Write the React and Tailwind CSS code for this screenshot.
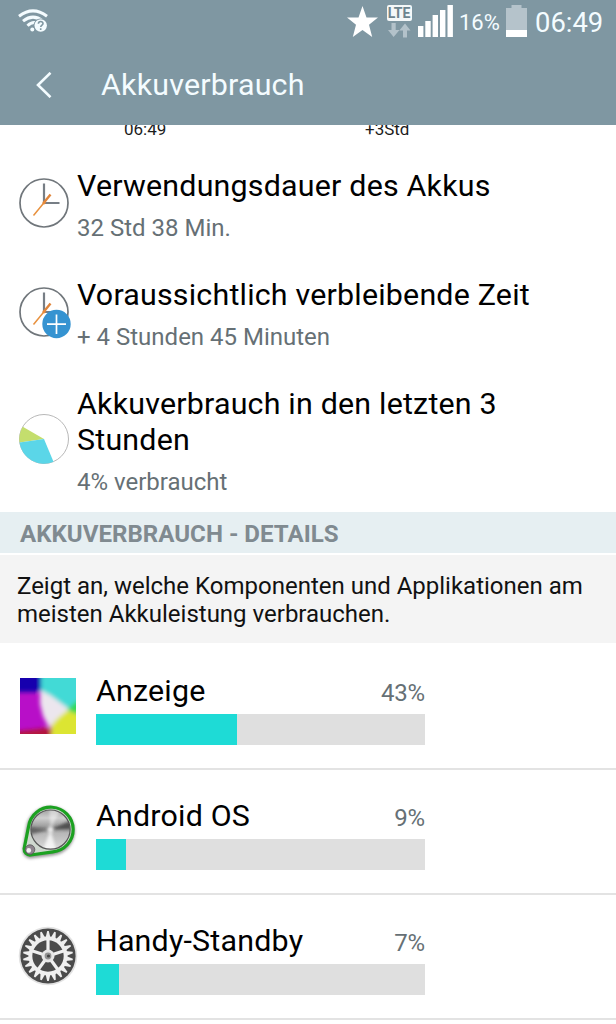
const teeth = Array.from({ length: 22 }, (_, i) => (i * 360) / 22);
const spokes = [0, 72, 144, 216, 288];

function WifiIcon() {
  return (
    <svg className="w-[30px] h-6" viewBox="0 0 30 24" fill="none">
      <g stroke="#f4fcff" strokeWidth="3">
        <path d="M1 7.2Q15 -3.4 29 7.2" />
        <path d="M5 12.2Q15 4 25 12.2" />
        <path d="M9.5 16.8Q14 12.2 19 14" />
      </g>
      <circle cx="14.3" cy="20.6" r="2" fill="#f4fcff" />
      <circle cx="22.7" cy="16.5" r="7.1" fill="#7f97a2" />
      <circle cx="22.7" cy="16.5" r="6.2" fill="#f4fcff" />
      <path
        d="M20.4 14.8C20.4 11.7 25.2 11.8 25 14.6C24.9 16 22.8 16.2 22.7 18M22.7 19.3V20.9"
        stroke="#7f97a2"
        strokeWidth="1.6"
      />
    </svg>
  );
}

function StarIcon() {
  return (
    <svg className="w-[31px] h-[31px]" viewBox="0 0 31 31" fill="#fff">
      <path d="M15.5 0L19.5 11.4L31 11.5L22 18.8L25.2 31L15.5 24L5.8 31L9 18.8L0 11.5L11.5 11.4Z" />
    </svg>
  );
}

function DataArrows() {
  return (
    <svg className="w-6 h-[15px]" viewBox="0 0 24 15" fill="#b3c2ca">
      <path d="M4.5 0H8.7V7H12.5L6.6 14L1 7H4.5Z" />
      <path d="M16 14.5H20V7.5H23.5L18 .5L12.3 7.5H16Z" />
    </svg>
  );
}

function SignalIcon() {
  return (
    <svg className="w-[35px] h-8" viewBox="0 0 35 32" fill="#fff">
      <rect x="0" y="21" width="5.4" height="11" />
      <rect x="7.3" y="16" width="5.4" height="16" />
      <rect x="14.6" y="10" width="5.4" height="22" />
      <rect x="22" y="5" width="5.4" height="27" />
      <rect x="29.5" y="0" width="5.4" height="32" />
    </svg>
  );
}

function BatteryIcon() {
  return (
    <svg className="w-[21px] h-8" viewBox="0 0 21 32">
      <path d="M5.5 0H15.5V3H21V32H0V3H5.5Z" fill="#b5c3cb" />
      <rect y="25" width="21" height="7" fill="#fff" />
    </svg>
  );
}

function ClockIcon({ plus }) {
  return (
    <svg className="w-[50px] h-[50px] overflow-visible" viewBox="0 0 50 50" fill="none">
      <circle cx="25" cy="25" r="24" stroke="#70767b" strokeWidth="1.7" />
      <path d="M25 5.5V25H40.5" stroke="#777e85" strokeWidth="2.2" />
      <path d="M31.5 16.5L25 24.5" stroke="#e0843a" strokeWidth="2.4" />
      <path d="M26 23.5L14.5 37.5" stroke="#e8913e" strokeWidth="1.5" />
      <circle cx="25" cy="24.8" r="1.6" fill="#e88a3a" />
      {plus && (
        <>
          <circle cx="37.5" cy="37" r="14.2" fill="#3593d1" />
          <path d="M28 37.2H47M37.5 27.5V47" stroke="#fff" strokeWidth="1.7" />
        </>
      )}
    </svg>
  );
}

function PieIcon() {
  return (
    <svg className="w-[50px] h-[50px]" viewBox="0 0 50 50">
      <circle cx="25" cy="25" r="24.5" fill="#fff" stroke="#a6a6a6" strokeWidth=".8" />
      <path d="M25 25L0.5 28.5A24.7 24.7 0 0 1 3.8 12.8Z" fill="#c4de6d" />
      <path d="M25 25L34.5 47.8A24.7 24.7 0 0 1 0.5 28.5Z" fill="#5bd6e8" />
    </svg>
  );
}

function DisplayIcon() {
  return (
    <svg className="w-14 h-14" viewBox="0 0 56 56">
      <defs>
        <filter id="soft" x="-20%" y="-20%" width="140%" height="140%">
          <feGaussianBlur stdDeviation="2.3" />
        </filter>
        <clipPath id="tile">
          <rect width="56" height="56" />
        </clipPath>
      </defs>
      <g clipPath="url(#tile)">
        <rect width="56" height="56" fill="#b80fc8" />
        <g filter="url(#soft)">
          <path d="M-10 -10H21V14H-10Z" fill="#1303ae" />
          <path d="M21 -10H66V32H50L21 14Z" fill="#43dad6" />
          <path d="M46 32L58 22H66V40H54Z" fill="#36d957" />
          <path d="M44 31L54 35L66 40V66H31V48Z" fill="#dce532" />
          <path d="M-10 54L18 51L29 49L33 66H-10Z" fill="#b3123c" />
          <path d="M20 12L30 17L49 31L38 40L29 50L23 38L20 26Z" fill="#ece6ee" />
        </g>
      </g>
    </svg>
  );
}

function AndroidOsIcon() {
  return (
    <svg className="w-14 h-14 overflow-visible" viewBox="0 0 56 56">
      <defs>
        <linearGradient id="metal" x1="0" y1="0" x2="0" y2="1">
          <stop offset="0" stopColor="#a2a2a2" />
          <stop offset=".2" stopColor="#cfcfcf" />
          <stop offset=".45" stopColor="#969696" />
          <stop offset=".6" stopColor="#b8b8b8" />
          <stop offset="1" stopColor="#dadada" />
        </linearGradient>
        <filter id="shade" x="-30%" y="-30%" width="160%" height="160%">
          <feGaussianBlur stdDeviation="1.5" />
        </filter>
        <clipPath id="disc">
          <circle cx="30.5" cy="26.6" r="19.4" />
        </clipPath>
      </defs>
      <path
        d="M7.6 24.4A23 23 0 1 1 32.9 50.9L10.7 54A6.5 6.5 0 0 1 4.1 46.6Z"
        fill="#8a8a8a"
        stroke="#999"
        strokeWidth="3"
        filter="url(#shade)"
      />
      <path
        d="M8.6 23.4A22.4 22.4 0 1 1 32.9 48.9L10.7 52A6 6 0 0 1 4.1 45.6Z"
        fill="#cfd8cf"
        stroke="#1ca121"
        strokeWidth="3.2"
      />
      <circle cx="30.5" cy="26.6" r="19.4" fill="url(#metal)" />
      <g clipPath="url(#disc)">
        <path d="M30.5 26.6L8 24V32Z" fill="#3d3d3d" opacity=".65" filter="url(#shade)" />
        <path d="M30.5 26.6L54 16V26Z" fill="#2f2f2f" opacity=".7" filter="url(#shade)" />
        <path d="M30.5 26.6L22 50H37Z" fill="#fff" opacity=".75" filter="url(#shade)" />
        <path d="M30.5 26.6L42 4H29Z" fill="#fff" opacity=".45" filter="url(#shade)" />
        <circle cx="30.5" cy="26.6" r="3" fill="#fff" opacity=".8" filter="url(#shade)" />
      </g>
      <circle cx="30.5" cy="26.6" r="19.6" fill="none" stroke="#565656" strokeWidth="1.2" />
      <circle cx="10" cy="46.6" r="4.8" fill="#8d838d" stroke="#555" strokeWidth=".8" />
      <circle cx="8.8" cy="47.4" r="2.3" fill="#f0eef0" />
    </svg>
  );
}

function GearIcon() {
  return (
    <svg className="w-[60px] h-[60px] -mx-0.5 shrink-0" viewBox="-30 -30 60 60">
      <circle r="29.3" fill="#e2e2e2" />
      <circle r="27.6" fill="#4b4b4b" />
      <g fill="#efefef">
        {teeth.map((a) => (
          <path key={a} d="M-2.5 -18L-.8 -25H.8L2.5 -18Z" transform={`rotate(${a})`} />
        ))}
      </g>
      <circle r="17.6" fill="none" stroke="#efefef" strokeWidth="3.8" />
      {spokes.map((a) => (
        <path key={a} d="M-1.6 0V-17H1.6V0Z" fill="#efefef" transform={`rotate(${a})`} />
      ))}
      <circle r="6.5" fill="#e6e6e6" />
      <circle r="3.4" fill="#929292" />
      <circle cx=".5" r="1.6" fill="#444" />
    </svg>
  );
}

const summary = [
  { title: ['Verwendungsdauer des Akkus'], detail: '32 Std 38 Min.', icon: <ClockIcon /> },
  { title: ['Voraussichtlich verbleibende Zeit'], detail: '+ 4 Stunden 45 Minuten', icon: <ClockIcon plus /> },
  { title: ['Akkuverbrauch in den letzten 3', 'Stunden'], detail: '4% verbraucht', icon: <PieIcon /> },
];

const consumers = [
  { name: 'Anzeige', percent: 43, icon: <DisplayIcon /> },
  { name: 'Android OS', percent: 9, icon: <AndroidOsIcon /> },
  { name: 'Handy-Standby', percent: 7, icon: <GearIcon /> },
];

function StatusBar() {
  return (
    <div className="h-[45px] flex items-start justify-between pl-[18px] pr-[13px] text-[#f4fcff]">
      <div className="pt-[9px]">
        <WifiIcon />
      </div>
      <div className="flex items-start">
        <div className="mt-1.5">
          <StarIcon />
        </div>
        <div className="ml-2 mt-[5px] w-[26px] flex flex-col items-center gap-[2px]">
          <span className="w-[25px] h-4 rounded-[2px] bg-[#f4f8f9] text-[#6d858f] text-[14px] leading-4 font-bold text-center">
            LTE
          </span>
          <DataArrows />
        </div>
        <div className="ml-[6px] mt-[5px]">
          <SignalIcon />
        </div>
        <span className="ml-[6px] mt-[10px] w-[41px] text-[22px] leading-[26px] whitespace-nowrap">16%</span>
        <div className="ml-[6px] mt-[5px]">
          <BatteryIcon />
        </div>
        <span className="ml-2 mt-[7px] w-[68px] text-[27.4px] leading-8 whitespace-nowrap">06:49</span>
      </div>
    </div>
  );
}

function SummaryItem({ title, detail, icon }) {
  return (
    <div className="flex items-center pl-[19px]">
      <div className="-mt-1 mr-2 shrink-0">{icon}</div>
      <div>
        {title.map((line) => (
          <p key={line} className="text-[30.4px] leading-9 tracking-[0.2px] text-black whitespace-nowrap">
            {line}
          </p>
        ))}
        <p className="mt-2.5 text-[24px] leading-7 text-[#667075] whitespace-nowrap">{detail}</p>
      </div>
    </div>
  );
}

function ConsumerRow({ name, percent, icon }) {
  return (
    <div className="h-[125px] flex pl-5 border-b-2 border-[#e3e3e3]">
      <div className="w-14 h-14 mt-[33px] flex items-center justify-center shrink-0">{icon}</div>
      <div className="ml-5 w-[329px] pt-7">
        <div className="flex justify-between h-9">
          <span className="text-[30.4px] leading-9 tracking-[0.2px] text-black whitespace-nowrap">{name}</span>
          <span className="pt-1 text-[24px] leading-8 tracking-[-0.2px] text-[#667075]">{percent}%</span>
        </div>
        <div className="mt-[5px] h-[31px] bg-[#dfdfdf]">
          <div className="h-full bg-[#1edbd6]" style={{ width: `${percent}%` }} />
        </div>
      </div>
    </div>
  );
}

export default function App() {
  return (
    <div className="w-[616px] h-[1024px] overflow-hidden bg-white font-['Roboto',sans-serif]">
      <header className="h-[125px] bg-[#7f97a2]">
        <StatusBar />
        <div className="flex items-center h-20 pl-9">
          <svg className="w-4 h-[26px]" viewBox="0 0 16 26" fill="none">
            <path d="M14.5 .8L2 13L14.5 25.2" stroke="#f4fcff" strokeWidth="2.6" />
          </svg>
          <h1 className="ml-[49px] text-[30.4px] leading-9 tracking-[0.2px] text-[#f4fcff]">Akkuverbrauch</h1>
        </div>
      </header>

      {/* axis labels of the chart, scrolled half under the header */}
      <div className="h-[43px] overflow-hidden">
        <div className="-mt-[6px] flex text-[17px] leading-5 text-[#1c1c1c]">
          <span className="ml-[124px] w-[241px]">06:49</span>
          <span>+3Std</span>
        </div>
      </div>

      <section className="flex flex-col gap-[35px] h-[344px]">
        {summary.map((item) => (
          <SummaryItem key={item.detail} {...item} />
        ))}
      </section>

      <h2 className="h-[41px] pl-5 pt-[6px] bg-[#e6eff2] text-[24.1px] leading-8 font-bold text-[#808a90]">
        AKKUVERBRAUCH - DETAILS
      </h2>
      <p className="mt-0.5 h-[88px] pl-[17px] pt-[17px] bg-[#f4f4f4] text-[24px] leading-7 text-[#111] whitespace-nowrap">
        Zeigt an, welche Komponenten und Applikationen am
        <br />
        meisten Akkuleistung verbrauchen.
      </p>

      <section className="mt-0.5">
        {consumers.map((item) => (
          <ConsumerRow key={item.name} {...item} />
        ))}
      </section>
    </div>
  );
}
